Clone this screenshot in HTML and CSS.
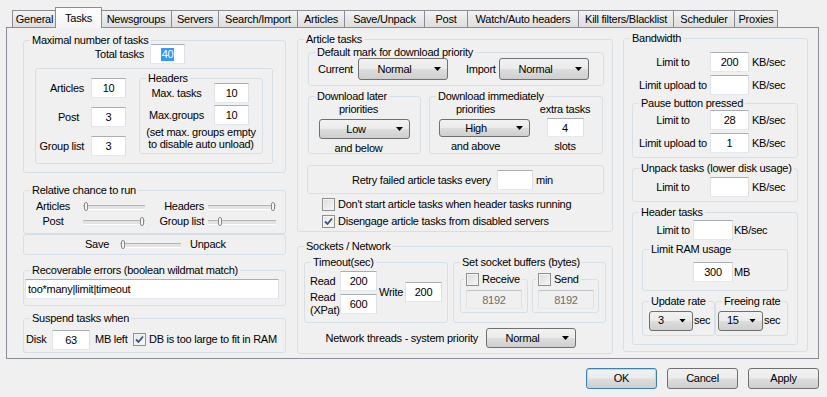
FILE: index.html
```html
<!DOCTYPE html>
<html lang="en">
<head>
    <meta charset="UTF-8">
    <title>Options - Tasks</title>
    <link rel="stylesheet" href="styles.css">
</head>
<body>
    <div class="tabs">
        <div class="tab tab-general">General</div>
        <div class="tab tab-tasks active">Tasks</div>
        <div class="tab tab-news">Newsgroups</div>
        <div class="tab tab-servers">Servers</div>
        <div class="tab tab-search">Search/Import</div>
        <div class="tab tab-articles">Articles</div>
        <div class="tab tab-save">Save/Unpack</div>
        <div class="tab tab-post">Post</div>
        <div class="tab tab-watch">Watch/Auto headers</div>
        <div class="tab tab-kill">Kill filters/Blacklist</div>
        <div class="tab tab-sched">Scheduler</div>
        <div class="tab tab-proxies">Proxies</div>
    </div>

    <div class="panel">
        <!-- Left column -->
        <div class="col col-left">
            <div class="box g-max">
                <span class="cap">Maximal number of tasks</span>
                <div class="row-total">
                    <span class="lbl">Total tasks</span>
                    <div class="edit w35"><span class="hl">40</span></div>
                </div>
                <div class="box g-inner">
                    <div class="inner-left">
                        <div class="irow"><span class="lbl">Articles</span><input class="edit w35" value="10"></div>
                        <div class="irow"><span class="lbl lbl-post">Post</span><input class="edit w35" value="3"></div>
                        <div class="irow"><span class="lbl">Group list</span><input class="edit w35" value="3"></div>
                    </div>
                    <div class="box g-headers">
                        <span class="cap">Headers</span>
                        <div class="hrow"><span class="lbl">Max. tasks</span><input class="edit w35" value="10"></div>
                        <div class="hrow"><span class="lbl">Max.groups</span><input class="edit w35" value="10"></div>
                        <div class="note">(set max. groups empty<br>to disable auto unload)</div>
                    </div>
                </div>
            </div>

            <div class="box g-rel">
                <span class="cap">Relative chance to run</span>
                <div class="rrow">
                    <span class="rl1">Articles</span>
                    <div class="slider s62"><span class="thumb at-min"></span></div>
                    <span class="rl2">Headers</span>
                    <div class="slider s68"><span class="thumb at-max"></span></div>
                </div>
                <div class="rrow">
                    <span class="rl1">Post</span>
                    <div class="slider s62"><span class="thumb at-max"></span></div>
                    <span class="rl2">Group list</span>
                    <div class="slider s68"><span class="thumb at-low"></span></div>
                </div>
            </div>
            <div class="box g-save">
                <span class="save-lbl">Save</span>
                <div class="slider s61"><span class="thumb at-min"></span></div>
                <span class="unpack-lbl">Unpack</span>
            </div>

            <div class="box g-err">
                <span class="cap">Recoverable errors (boolean wildmat match)</span>
                <input class="edit w254 left" value="too*many|limit|timeout">
            </div>

            <div class="box g-susp">
                <span class="cap">Suspend tasks when</span>
                <span class="disk-lbl">Disk</span>
                <input class="edit w38" value="63">
                <span class="mb-lbl">MB left</span>
                <span class="chk on"><svg width="11" height="11" viewBox="0 0 11 11"><path d="M2 5.5 L4.5 8 L9 2.5" fill="none" stroke="#3b5288" stroke-width="1.8"/></svg></span>
                <span class="chk-lbl">DB is too large to fit in RAM</span>
            </div>
        </div>

        <!-- Middle column -->
        <div class="col col-mid">
            <div class="box g-art">
                <span class="cap">Article tasks</span>
                <div class="box g-def">
                    <span class="cap">Default mark for download priority</span>
                    <span class="cur-lbl">Current</span>
                    <div class="combo w90"><span class="val">Normal</span><i></i></div>
                    <span class="imp-lbl">Import</span>
                    <div class="combo w90"><span class="val">Normal</span><i></i></div>
                </div>
                <div class="later-row">
                    <div class="box g-later">
                        <span class="cap">Download later</span>
                        <div class="pcol">
                            <span class="ptxt">priorities</span>
                            <div class="combo w91 h20"><span class="val">Low</span><i></i></div>
                            <span class="ptxt">and below</span>
                        </div>
                    </div>
                    <div class="box g-imm">
                        <span class="cap">Download immediately</span>
                        <div class="pcol wide">
                            <span class="ptxt">priorities</span>
                            <div class="combo w91 h20"><span class="val">High</span><i></i></div>
                            <span class="ptxt">and above</span>
                        </div>
                        <div class="xcol">
                            <span>extra tasks</span>
                            <input class="edit w37" value="4">
                            <span>slots</span>
                        </div>
                    </div>
                </div>
                <div class="box g-retry">
                    <span class="retry-lbl">Retry failed article tasks every</span>
                    <input class="edit w36" value="">
                    <span class="min-lbl">min</span>
                </div>
                <div class="chk-row first">
                    <span class="chk"></span>
                    <span class="chk-lbl">Don't start article tasks when header tasks running</span>
                </div>
                <div class="chk-row">
                    <span class="chk on"><svg width="11" height="11" viewBox="0 0 11 11"><path d="M2 5.5 L4.5 8 L9 2.5" fill="none" stroke="#3b5288" stroke-width="1.8"/></svg></span>
                    <span class="chk-lbl">Disengage article tasks from disabled servers</span>
                </div>
            </div>

            <div class="box g-sock">
                <span class="cap">Sockets / Network</span>
                <div class="sock-row">
                    <div class="box g-timeout">
                        <span class="cap">Timeout(sec)</span>
                        <div class="tcol">
                            <div class="trow"><span class="tl">Read</span><input class="edit w37" value="200"></div>
                            <div class="trow tall"><span class="tl">Read<br>(XPat)</span><input class="edit w37" value="600"></div>
                        </div>
                        <div class="trow write"><span class="wl">Write</span><input class="edit w37" value="200"></div>
                    </div>
                    <div class="box g-buf">
                        <span class="cap">Set socket buffers (bytes)</span>
                        <div class="box g-rcv">
                            <span class="cap ck"><span class="chk"></span>Receive</span>
                            <input class="edit w56" value="8192" disabled>
                        </div>
                        <div class="box g-snd">
                            <span class="cap ck"><span class="chk"></span>Send</span>
                            <input class="edit w56" value="8192" disabled>
                        </div>
                    </div>
                </div>
                <div class="net-row">
                    <span class="net-lbl">Network threads - system priority</span>
                    <div class="combo w90 h20"><span class="val">Normal</span><i></i></div>
                </div>
            </div>
        </div>

        <!-- Right column -->
        <div class="col col-right">
            <div class="box g-bw">
                <span class="cap">Bandwidth</span>
                <div class="bw-row"><span class="bl">Limit to</span><input class="edit w39" value="200"><span class="unit">KB/sec</span></div>
                <div class="bw-row"><span class="bl">Limit upload to</span><input class="edit w39" value=""><span class="unit">KB/sec</span></div>

                <div class="box g-pause">
                    <span class="cap">Pause button pressed</span>
                    <div class="bw-row"><span class="bl">Limit to</span><input class="edit w39" value="28"><span class="unit">KB/sec</span></div>
                    <div class="bw-row"><span class="bl">Limit upload to</span><input class="edit w39" value="1"><span class="unit">KB/sec</span></div>
                </div>

                <div class="box g-unp">
                    <span class="cap">Unpack tasks (lower disk usage)</span>
                    <div class="bw-row"><span class="bl">Limit to</span><input class="edit w39" value=""><span class="unit">KB/sec</span></div>
                </div>

                <div class="box g-hdr">
                    <span class="cap">Header tasks</span>
                    <div class="hdr-row"><span class="hl-lbl">Limit to</span><input class="edit w40" value=""><span class="unit">KB/sec</span></div>
                    <div class="box g-ram">
                        <span class="cap">Limit RAM usage</span>
                        <input class="edit w40" value="300"><span class="unit">MB</span>
                    </div>
                    <div class="rate-row">
                        <div class="box g-upd">
                            <span class="cap">Update rate</span>
                            <div class="combo small w44 h20"><span class="val">3</span><i></i></div>
                            <span class="unit">sec</span>
                        </div>
                        <div class="box g-frr">
                            <span class="cap">Freeing rate</span>
                            <div class="combo small w45 h20"><span class="val">15</span><i></i></div>
                            <span class="unit">sec</span>
                        </div>
                    </div>
                </div>
            </div>
        </div>
    </div>

    <div class="buttons">
        <button class="btn def">OK</button>
        <button class="btn">Cancel</button>
        <button class="btn">Apply</button>
    </div>
</body>
</html>
```

FILE: styles.css
```css
* {
    box-sizing: border-box;
}
body {
    margin: 0;
    width: 827px;
    height: 397px;
    overflow: hidden;
    background-color: #f0f0f0;
    font-family: "Liberation Sans", Arial, sans-serif;
    font-size: 11px;
    line-height: 13px;
    letter-spacing: -0.25px;
    color: #000;
}

/* Tab strip */
.tabs {
    display: flex;
    align-items: flex-end;
    height: 17px;
    margin: 10px 0 0 12px;
    position: relative;
    z-index: 1;
}
.tab {
    height: 17px;
    margin-left: -1px;
    border: 1px solid #898c95;
    border-bottom: none;
    background: linear-gradient(#f4f4f4, #e8e8e8 50%, #dedede);
    text-align: center;
    line-height: 16px;
    white-space: nowrap;
}
.tab:first-child {
    margin-left: 0;
}
.tab.active {
    position: relative;
    z-index: 2;
    height: 21px;
    margin-left: -2px;
    margin-bottom: -1px;
    padding-top: 2px;
    background: linear-gradient(#fdfdfd, #f4f4f4);
}
.tab.active + .tab {
    margin-left: -2px;
}
.tab-general { width: 45px; }
.tab-tasks { width: 47px; }
.tab-news { width: 72px; }
.tab-servers { width: 48px; }
.tab-search { width: 80px; }
.tab-articles { width: 48px; }
.tab-save { width: 81px; }
.tab-post { width: 44px; }
.tab-watch { width: 112px; }
.tab-kill { width: 96px; }
.tab-sched { width: 62px; }
.tab-proxies { width: 44px; }

.panel {
    display: flex;
    align-items: flex-start;
    width: 813px;
    height: 332px;
    margin-left: 6px;
    padding-left: 16px;
    border: 1px solid #898c95;
    background-color: #f0f0f0;
}
.col-left { width: 263px; }
.col-mid { width: 316px; margin-left: 11px; }
.col-right { width: 185px; margin-left: 10px; }

/* Group boxes */
.box {
    position: relative;
    border: 1px solid #d5dfe5;
    border-radius: 3px;
}
.cap {
    position: absolute;
    top: -7px;
    left: 6px;
    padding: 0 2px;
    line-height: 13px;
    white-space: nowrap;
    background-color: #f0f0f0;
}
.cap.ck {
    display: flex;
    align-items: center;
    left: 3px;
}
.cap.ck .chk {
    margin-right: 3px;
}

/* Controls */
.edit {
    height: 20px;
    margin: 0;
    padding: 0;
    border: 1px solid;
    border-color: #abadb3 #dbdfe6 #e3e9ef #e2e3ea;
    background-color: #fff;
    font: inherit;
    letter-spacing: inherit;
    color: #000;
    text-align: center;
    outline: none;
}
div.edit {
    display: flex;
    align-items: center;
    justify-content: center;
}
.edit.left {
    text-align: left;
    padding-left: 2px;
}
.edit:disabled {
    background-color: #f0f0f0;
    color: #6d6d6d;
    border-color: #c2c4c8 #dfe1e4 #e6e8ea #dfe1e4;
}
.hl {
    background-color: #3399ff;
    color: #fff;
    padding: 0 1px;
    line-height: 13px;
}
.w35 { width: 35px; }
.w36 { width: 36px; }
.w37 { width: 37px; }
.w38 { width: 38px; }
.w39 { width: 39px; }
.w40 { width: 40px; }
.w56 { width: 56px; }
.w254 { width: 254px; }

.combo {
    position: relative;
    display: flex;
    align-items: center;
    height: 22px;
    padding-right: 17px;
    border: 1px solid #707070;
    border-radius: 3px;
    background: linear-gradient(#f2f2f2, #ebebeb 48%, #dddddd 52%, #cfcfcf);
}
.combo.h20 { height: 20px; }
.combo .val {
    flex: 1;
    text-align: center;
}
.combo i {
    position: absolute;
    right: 6px;
    top: 50%;
    margin-top: -2px;
    width: 7px;
    height: 4px;
    background-color: #000;
    clip-path: polygon(0 0, 100% 0, 50% 100%);
}
.combo.small .val {
    text-align: left;
    padding-left: 8px;
}
.w44 { width: 44px; }
.w45 { width: 45px; }
.w90 { width: 90px; }
.w91 { width: 91px; }

.chk {
    display: inline-flex;
    align-items: center;
    justify-content: center;
    width: 13px;
    height: 13px;
    flex: none;
    border: 1px solid #8e8f8f;
    background: linear-gradient(135deg, #dcdcdc, #f6f6f6);
    box-shadow: inset 0 0 0 1px #f4f4f4;
}
.chk.on {
    background: linear-gradient(135deg, #e6e6e6, #fbfbfb);
}

.slider {
    position: relative;
    height: 15px;
}
.slider::before {
    content: "";
    position: absolute;
    left: 0;
    right: 0;
    top: 6px;
    height: 3px;
    border-top: 1px solid #b4b4b4;
    border-bottom: 1px solid #fff;
    background-color: #e3e3e3;
}
.thumb {
    position: absolute;
    top: 3px;
    width: 4px;
    height: 9px;
    border: 1px solid #8a8a8a;
    border-radius: 2px;
    background-color: #f6f6f6;
}
.at-min { left: 1px; }
.at-max { right: 1px; }
.at-low { left: 10px; }
.s61 { width: 61px; }
.s62 { width: 62px; }
.s68 { width: 68px; }

/* Maximal number of tasks */
.g-max {
    height: 133px;
    margin-top: 12px;
    padding-top: 3px;
}
.row-total {
    display: flex;
    align-items: center;
    height: 20px;
}
.row-total .lbl {
    width: 126px;
    padding-right: 6px;
    text-align: right;
}
.g-inner {
    display: flex;
    align-items: flex-start;
    width: 238px;
    height: 96px;
    margin: 4px 0 0 11px;
    padding-top: 9px;
}
.inner-left {
    display: flex;
    flex-direction: column;
    gap: 9px;
    width: 90px;
}
.irow {
    display: flex;
    align-items: center;
    height: 20px;
}
.irow .lbl {
    width: 55px;
    padding-right: 7px;
    text-align: right;
}
.irow .lbl-post {
    padding-right: 12px;
}
.g-headers {
    width: 124px;
    height: 76px;
    margin-left: 13px;
    padding-top: 4px;
}
.hrow {
    display: flex;
    align-items: center;
    height: 20px;
}
.hrow + .hrow {
    margin-top: 2px;
}
.hrow .lbl {
    width: 73px;
    margin-right: 1px;
    text-align: center;
}
.note {
    margin-top: 1px;
    line-height: 12px;
    text-align: center;
    white-space: nowrap;
}

/* Relative chance */
.g-rel {
    height: 44px;
    margin-top: 17px;
    padding-top: 8px;
}
.rrow {
    display: flex;
    align-items: center;
    height: 15px;
}
.rl1 {
    width: 58px;
    text-align: center;
}
.rrow .s62 { margin-left: 1px; }
.rl2 {
    width: 59px;
    text-align: right;
}
.rrow .s68 { margin-left: 4px; }
.g-save {
    display: flex;
    align-items: center;
    height: 21px;
    padding-left: 61px;
}
.save-lbl { width: 35px; }
.unpack-lbl { margin-left: 9px; }

.g-err {
    height: 36px;
    margin-top: 15px;
    padding: 8px 0 0 1px;
}
.g-susp {
    display: flex;
    align-items: center;
    height: 35px;
    margin-top: 12px;
    padding: 8px 0 0 2px;
}
.disk-lbl { width: 26px; }
.mb-lbl { width: 38px; margin-left: 5px; }
.chk-lbl { margin-left: 3px; white-space: nowrap; }

/* Article tasks */
.g-art {
    height: 193px;
    margin-top: 11px;
    padding: 12px 0 0 10px;
}
.g-def {
    display: flex;
    align-items: center;
    width: 296px;
    height: 34px;
    padding-left: 9px;
}
.cur-lbl { width: 40px; }
.imp-lbl { width: 33px; margin-left: 18px; }
.later-row {
    display: flex;
    margin-top: 10px;
}
.g-later {
    width: 113px;
    height: 58px;
    padding: 6px 0 0 10px;
}
.g-imm {
    display: flex;
    width: 174px;
    height: 58px;
    margin-left: 8px;
    padding: 6px 0 0 9px;
}
.pcol {
    display: flex;
    flex-direction: column;
    width: 91px;
}
.ptxt {
    padding-right: 12px;
    text-align: center;
    line-height: 13px;
}
.pcol.wide .ptxt { padding-right: 18px; }
.pcol .combo { margin: 3px 0; }
.xcol {
    display: flex;
    flex-direction: column;
    align-items: center;
    width: 56px;
    margin-left: 7px;
    line-height: 13px;
}
.xcol .edit { margin: 2px 0 3px; }
.g-retry {
    display: flex;
    align-items: flex-start;
    width: 297px;
    height: 29px;
    margin: 11px 0 0 -1px;
    padding: 4px 0 0 44px;
}
.retry-lbl { width: 145px; line-height: 20px; }
.min-lbl { margin-left: 3px; line-height: 20px; }
.chk-row {
    display: flex;
    align-items: center;
    height: 17px;
    margin-left: 14px;
}
.chk-row.first { margin-top: 2px; }

/* Sockets */
.g-sock {
    height: 108px;
    margin-top: 14px;
    padding: 15px 0 0 6px;
}
.sock-row { display: flex; }
.g-timeout {
    display: flex;
    align-items: flex-start;
    width: 144px;
    height: 61px;
    padding: 8px 0 0 5px;
}
.trow {
    display: flex;
    align-items: center;
    height: 20px;
}
.trow.tall { height: 26px; }
.tl { width: 30px; line-height: 13px; }
.trow.write { margin: 11px 0 0 2px; }
.wl { width: 26px; }
.g-buf {
    display: flex;
    width: 153px;
    height: 61px;
    margin-left: 5px;
    padding: 16px 0 0 6px;
}
.g-rcv, .g-snd {
    height: 34px;
    padding: 10px 0 0 5px;
}
.g-rcv { width: 68px; }
.g-snd { width: 67px; margin-left: 4px; }
.g-rcv .edit, .g-snd .edit { height: 19px; }
.net-row {
    display: flex;
    align-items: center;
    justify-content: flex-end;
    height: 20px;
    margin-top: 5px;
    padding-right: 36px;
}
.net-lbl { margin-right: 8px; }

/* Bandwidth */
.g-bw {
    height: 314px;
    margin-top: 10px;
    padding-top: 13px;
}
.bw-row {
    display: flex;
    align-items: center;
    height: 20px;
}
.bw-row + .bw-row { margin-top: 3px; }
.bl {
    display: flex;
    justify-content: center;
    width: 68px;
    margin-left: 15px;
    margin-right: 3px;
    white-space: nowrap;
}
.unit { margin-left: 3px; }
.g-pause {
    width: 166px;
    height: 55px;
    margin: 8px 0 0 8px;
    padding-top: 6px;
}
.g-pause .bl, .g-unp .bl { margin-left: 6px; }
.g-unp {
    width: 166px;
    height: 34px;
    margin: 10px 0 0 8px;
    padding-top: 8px;
}
.g-hdr {
    width: 166px;
    height: 133px;
    margin: 10px 0 0 8px;
    padding-top: 7px;
}
.hdr-row {
    display: flex;
    align-items: center;
    height: 20px;
}
.hl-lbl {
    width: 57px;
    margin-right: 3px;
    text-align: right;
}
.hdr-row .unit, .g-ram .unit, .g-upd .unit, .g-frr .unit { margin-left: 1px; }
.g-ram {
    display: flex;
    align-items: center;
    width: 146px;
    height: 42px;
    margin: 9px 0 0 9px;
    padding: 4px 0 0 50px;
}
.rate-row {
    display: flex;
    margin: 10px 0 0 9px;
}
.g-upd, .g-frr {
    display: flex;
    align-items: center;
    width: 73px;
    height: 35px;
    padding-top: 4px;
}
.g-upd { padding-left: 6px; }
.g-frr { padding-left: 2px; }

/* Dialog buttons */
.buttons {
    display: flex;
    justify-content: flex-end;
    gap: 10px;
    margin-top: 9px;
    padding-right: 8px;
}
.btn {
    width: 71px;
    height: 21px;
    padding: 0;
    border: 1px solid #707070;
    border-radius: 3px;
    background: linear-gradient(#f2f2f2, #ebebeb 48%, #dddddd 52%, #cfcfcf);
    font: inherit;
    letter-spacing: inherit;
    color: #000;
}
.btn.def {
    border-color: #3c7fb1;
    box-shadow: inset 0 0 0 1px #a9dcf6;
}
```
